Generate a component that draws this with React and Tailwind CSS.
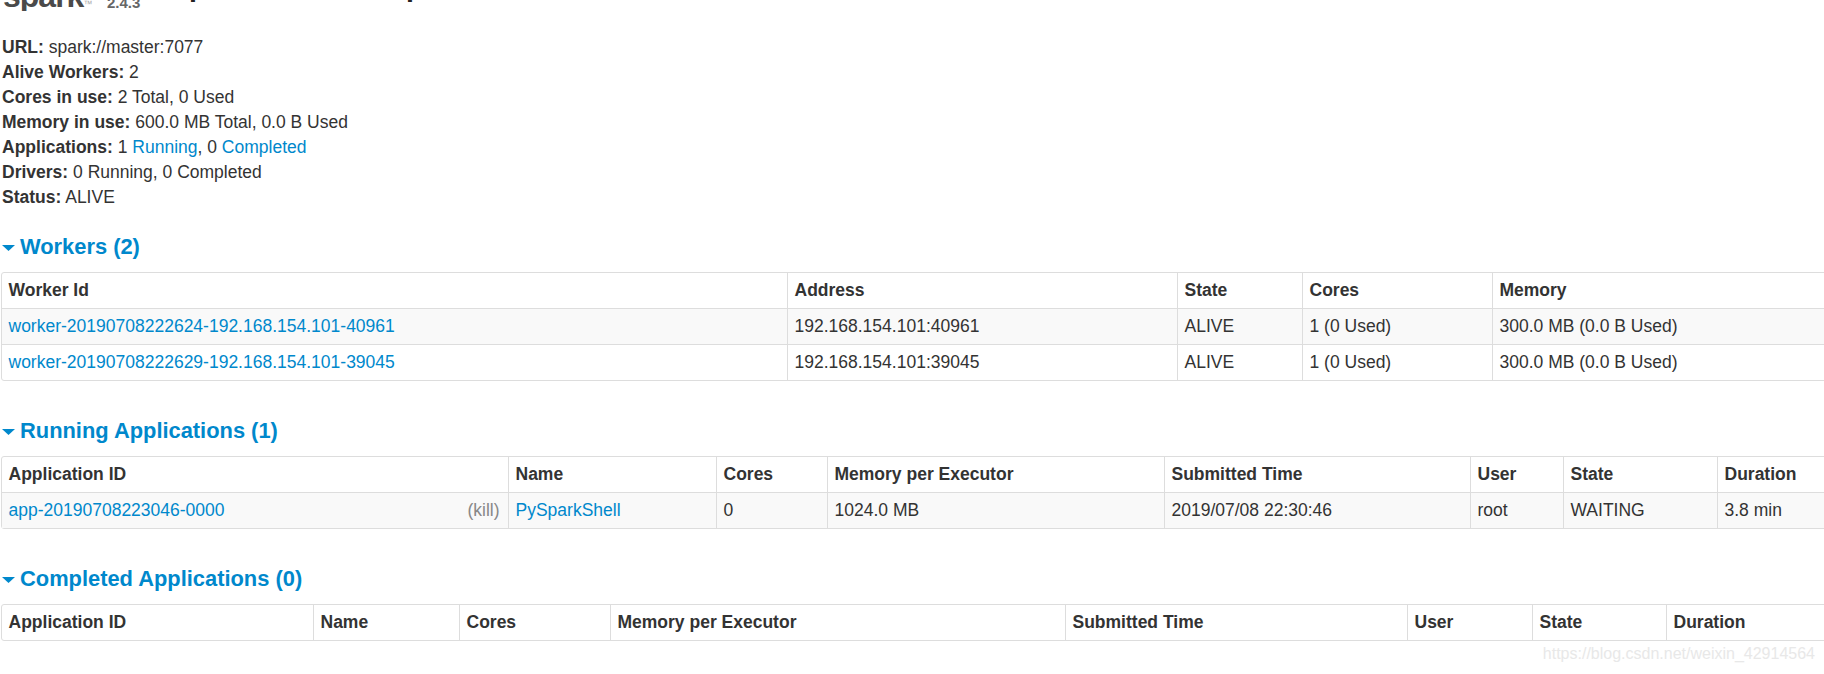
import React from "react";

const linkClass = "text-[#0088cc]";

const summary = [
  ["URL:", "spark://master:7077"],
  ["Alive Workers:", "2"],
  ["Cores in use:", "2 Total, 0 Used"],
  ["Memory in use:", "600.0 MB Total, 0.0 B Used"],
  [
    "Applications:",
    <>
      1 <a className={linkClass}>Running</a>, 0 <a className={linkClass}>Completed</a>
    </>,
  ],
  ["Drivers:", "0 Running, 0 Completed"],
  ["Status:", "ALIVE"],
];

const Caret = () => (
  <svg width="13" height="6" viewBox="0 0 13 6" className="mt-[2px] shrink-0">
    <polygon points="0,0 13,0 6.5,6" fill="#0088cc" />
  </svg>
);

const Section = ({ title, className, children }) => (
  <section className={className}>
    <h4 className="ml-[2px] mb-[10px] flex h-[30px] items-center gap-[5px] text-[21.875px] font-bold text-[#0088cc]">
      <Caret />
      {title}
    </h4>
    {children}
  </section>
);

const DataTable = ({ widths, headers, rows }) => (
  <div className="ml-px w-max rounded-[3px] border border-[#ddd]">
    <table className="table-fixed border-separate border-spacing-0" style={{ width: widths.reduce((a, b) => a + b, 0) }}>
      <colgroup>
        {widths.map((w, i) => (
          <col key={i} style={{ width: w }} />
        ))}
      </colgroup>
      <thead>
        <tr>
          {headers.map((h, i) => (
            <th
              key={h}
              className={`h-[35px] px-[6.5px] text-left align-middle font-bold ${i > 0 ? "border-l border-[#ddd]" : ""}`}
            >
              {h}
            </th>
          ))}
        </tr>
      </thead>
      <tbody>
        {rows.map((row, r) => (
          <tr key={r} className={r % 2 === 0 ? "bg-[#f9f9f9]" : ""}>
            {row.map((cell, i) => (
              <td
                key={i}
                className={`h-[36px] border-t border-[#ddd] px-[6.5px] align-middle ${i > 0 ? "border-l" : ""}`}
              >
                {cell}
              </td>
            ))}
          </tr>
        ))}
      </tbody>
    </table>
  </div>
);

export default function App() {
  return (
    <div className="relative h-[674px] w-[1824px] overflow-hidden bg-white font-['Liberation_Sans',Arial,sans-serif] text-[17.5px] text-[#333]">
      {/* header is cut by the top of the shot, only the bottoms of the glyphs show */}
      <header className="flex h-[11px] items-start overflow-hidden">
        <span className="-mt-[24px] ml-[3px] w-[84px] whitespace-nowrap text-[32px] leading-[40px] font-bold tracking-[-1px] text-[#4a4a4a]">
          spark<span className="text-[9px] font-normal tracking-normal text-[#aaa]">™</span>
        </span>
        <span className="-mt-[5px] ml-[20px] w-[63px] text-[15px] leading-[15px] font-bold text-[#666]">2.4.3</span>
        <h3 className="-mt-[32px] whitespace-nowrap text-[28.5px] leading-[36px] font-bold text-[#222]">
          Spark Master at spark://master:7077
        </h3>
      </header>

      <ul className="mt-[24px] ml-[2px]">
        {summary.map(([label, value]) => (
          <li key={label} className="h-[25px] leading-[25px]">
            <strong className="font-bold">{label}</strong> {value}
          </li>
        ))}
      </ul>

      <Section title="Workers (2)" className="mt-[22px]">
        <DataTable
          widths={[785, 390, 125, 190, 400]}
          headers={["Worker Id", "Address", "State", "Cores", "Memory"]}
          rows={[
            [
              <a className={linkClass}>worker-20190708222624-192.168.154.101-40961</a>,
              "192.168.154.101:40961",
              "ALIVE",
              "1 (0 Used)",
              "300.0 MB (0.0 B Used)",
            ],
            [
              <a className={linkClass}>worker-20190708222629-192.168.154.101-39045</a>,
              "192.168.154.101:39045",
              "ALIVE",
              "1 (0 Used)",
              "300.0 MB (0.0 B Used)",
            ],
          ]}
        />
      </Section>

      <Section title="Running Applications (1)" className="mt-[35px]">
        <DataTable
          widths={[506, 208, 111, 337, 306, 93, 154, 200]}
          headers={["Application ID", "Name", "Cores", "Memory per Executor", "Submitted Time", "User", "State", "Duration"]}
          rows={[
            [
              <div className="flex justify-between pr-[2px]">
                <a className={linkClass}>app-20190708223046-0000</a>
                <span className="text-[#888]">(kill)</span>
              </div>,
              <a className={linkClass}>PySparkShell</a>,
              "0",
              "1024.0 MB",
              "2019/07/08 22:30:46",
              "root",
              "WAITING",
              "3.8 min",
            ],
          ]}
        />
      </Section>

      <Section title="Completed Applications (0)" className="mt-[35px]">
        <DataTable
          widths={[311, 146, 151, 455, 342, 125, 134, 200]}
          headers={["Application ID", "Name", "Cores", "Memory per Executor", "Submitted Time", "User", "State", "Duration"]}
          rows={[]}
        />
      </Section>

      <span className="absolute right-[9px] bottom-[8px] text-[16px] text-[#e8e8e8]">
        https://blog.csdn.net/weixin_42914564
      </span>
    </div>
  );
}
